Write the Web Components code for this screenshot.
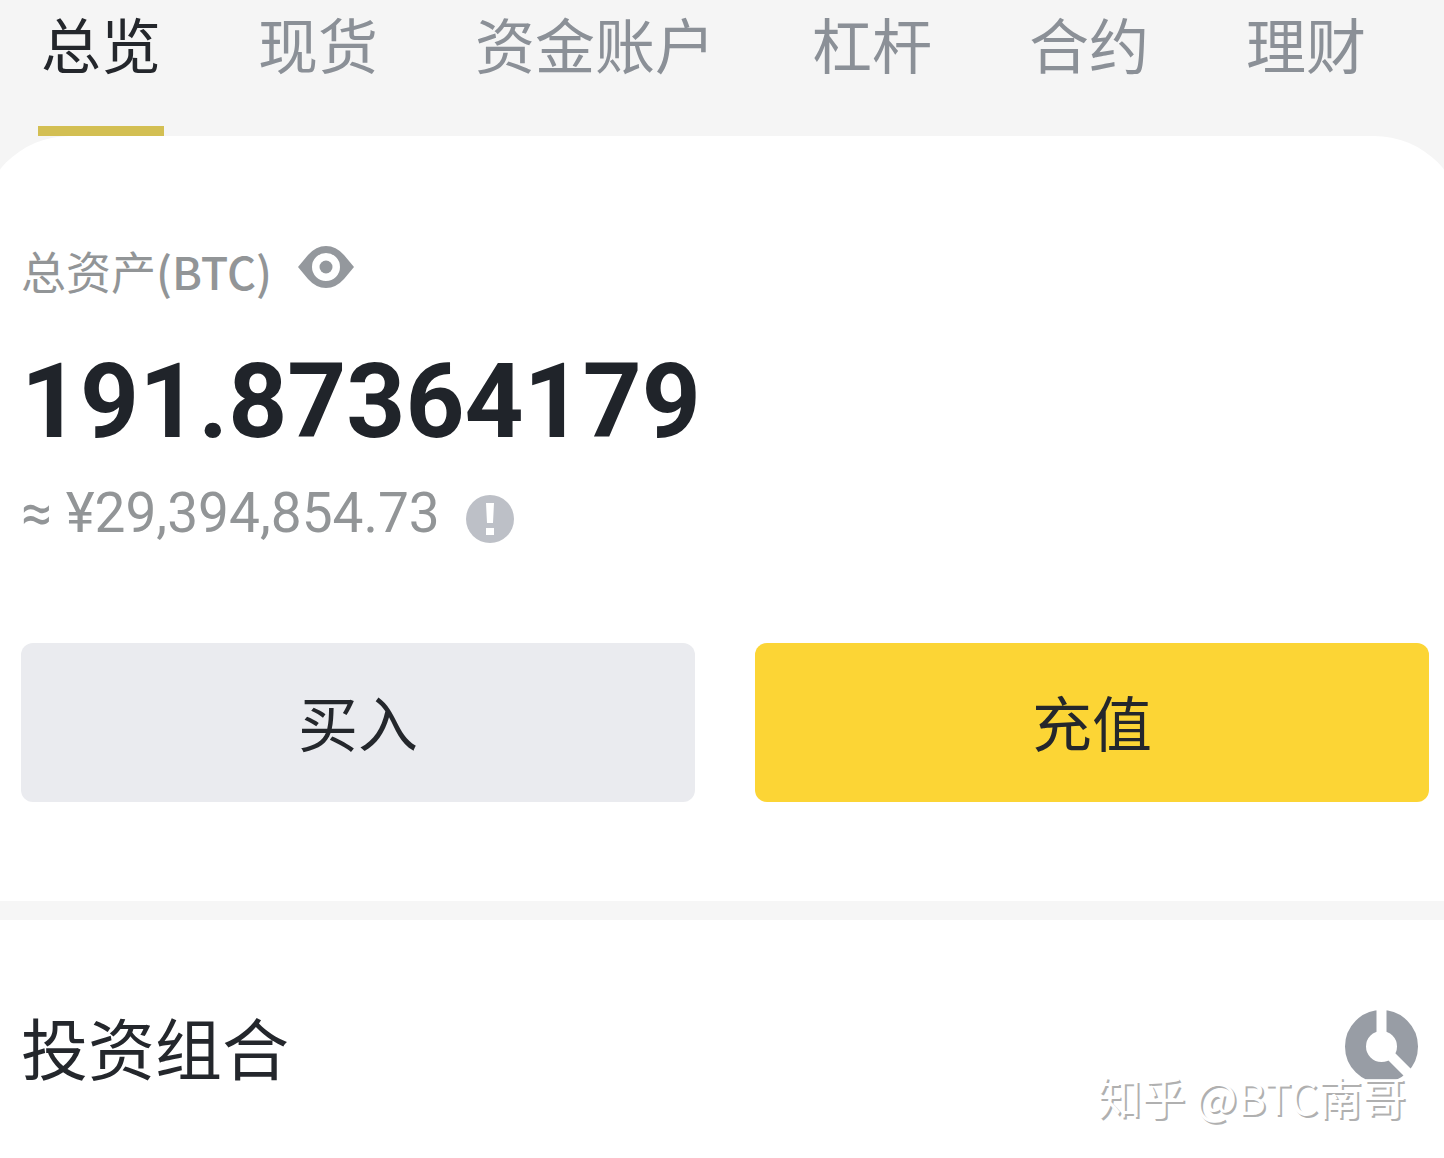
<!DOCTYPE html>
<html lang="zh-CN">
<head>
<meta charset="utf-8">
<meta name="viewport" content="width=device-width, initial-scale=1">
<title>总览</title>
<style>
  html { background: #fff; }
  body { margin: 0; font-family: 'Noto Sans CJK SC', sans-serif; color: #24272c; }
</style>
</head>
<body>
<wallet-page>
  <wallet-tabs slot="tabs">
    <wallet-tab selected>总览</wallet-tab>
    <wallet-tab>现货</wallet-tab>
    <wallet-tab>资金账户</wallet-tab>
    <wallet-tab>杠杆</wallet-tab>
    <wallet-tab>合约</wallet-tab>
    <wallet-tab>理财</wallet-tab>
  </wallet-tabs>
  <asset-balance unit="BTC" amount="191.87364179" fiat="¥29,394,854.73">总资产</asset-balance>
  <action-row>
    <action-button>买入</action-button>
    <action-button kind="primary">充值</action-button>
  </action-row>
  <portfolio-head slot="portfolio">投资组合</portfolio-head>
  <author-mark slot="mark">知乎 @BTC南哥</author-mark>
</wallet-page>

<script>
(function () {
  // shared reset for the buttons in each shadow root
  const BTN = `
    button { margin:0; padding:0; border:0; background:none; font:inherit; color:inherit; cursor:pointer; }
    svg { display:block; }`;

  function define(name, html, setup) {
    if (customElements.get(name)) return;
    const tpl = document.createElement('template');
    tpl.innerHTML = html;
    customElements.define(name, class extends HTMLElement {
      connectedCallback() {
        if (this.shadowRoot) return;
        const root = this.attachShadow({ mode: 'open' });
        root.appendChild(tpl.content.cloneNode(true));
        if (setup) setup(this, root);
      }
    });
  }

  // page shell: grey header, white sheet whose round corners run past the edges
  define('wallet-page', `
    <style>
      :host { display:block; position:relative; overflow:hidden; min-height:100vh; background:#fff; }
      header { background:#f5f5f5; padding-bottom:36px; }
      main { position:relative; }
      .sheet { margin:-36px -20px 0; padding:107px 35px 99px 41px; background:#fff; border-radius:90px 90px 0 0; }
      .band { height:19px; background:#f6f6f6; }
    </style>
    <header><slot name="tabs"></slot></header>
    <main>
      <div class="sheet"><slot></slot></div>
      <div class="band"></div>
      <slot name="portfolio"></slot>
    </main>
    <slot name="mark"></slot>`);

  define('wallet-tabs', `
    <style>
      :host { display:block; position:relative; z-index:1; }
      nav { display:flex; gap:91px; padding:0 38px; }
    </style>
    <nav><slot></slot></nav>`);

  define('wallet-tab', `
    <style>${BTN}
      :host { display:block; flex:none; font-size:60px; line-height:86px; color:#8b9097; }
      :host([selected]) { color:#24272c; }
      button { display:block; padding:0 3px 40px; border-bottom:10px solid transparent; }
      :host([selected]) button { border-color:#d3bf53; }
    </style>
    <button type="button"><slot></slot></button>`,
    (host, root) => {
      const btn = root.querySelector('button');
      btn.setAttribute('aria-pressed', host.hasAttribute('selected'));
      btn.addEventListener('click', () => {
        for (const t of host.parentNode.children) {
          t.toggleAttribute('selected', t === host);
          t.shadowRoot.querySelector('button').setAttribute('aria-pressed', t === host);
        }
      });
    });

  define('asset-balance', `
    <style>${BTN}
      :host { display:block; color:#929597; }
      .row { display:flex; }
      .label { align-items:flex-start; gap:26px; font-size:45px; line-height:56px; }
      .unit { font-weight:500; }
      .amount { font:700 103px/128px Roboto,sans-serif; color:#20242a; padding-top:39px; }
      .fiat { align-items:center; gap:26px; font:400 55px/64px Roboto,sans-serif; padding-top:15px; }
      .fiat button { padding-top:12px; }
    </style>
    <div class="row label">
      <span><slot></slot><span class="unit"></span></span>
      <button type="button" aria-label="显示或隐藏">
        <svg width="56" height="48" viewBox="0 -3 56 48">
          <path fill="#94989d" fill-rule="evenodd" d="M0 21 L10 9 Q18 0 28 0 T46 9 L56 21 L46 33 Q38 42 28 42 T10 33Z M28 7 a14 14 0 1 0 0 28 a14 14 0 1 0 0 -28Z"/>
          <circle cx="28" cy="21" r="6.5" fill="#94989d"/>
        </svg>
      </button>
    </div>
    <div class="amount"></div>
    <div class="row fiat">
      <span class="value"></span>
      <button type="button" aria-label="说明">
        <svg width="48" height="48" viewBox="0 0 48 48">
          <circle cx="24" cy="24" r="24" fill="#bdc0c7"/>
          <path fill="#fff" d="M20 8h8l-1 20h-6z M20 33h8v7h-8z"/>
        </svg>
      </button>
    </div>`,
    (host, root) => {
      root.querySelector('.unit').textContent = '(' + host.getAttribute('unit') + ')';
      root.querySelector('.amount').textContent = host.getAttribute('amount');
      root.querySelector('.value').textContent = '≈ ' + host.getAttribute('fiat');
    });

  define('action-row', `
    <style>
      :host { display:grid; grid-template-columns:1fr 1fr; gap:60px; padding-top:98px; }
    </style>
    <slot></slot>`);

  define('action-button', `
    <style>${BTN}
      :host { display:block; }
      button { width:100%; padding:34px 0 37px; border-radius:12px; background:#eaebef; font-size:60px; line-height:88px; }
      :host([kind=primary]) button { background:#fcd535; }
    </style>
    <button type="button"><slot></slot></button>`);

  define('portfolio-head', `
    <style>${BTN}
      :host { display:flex; align-items:center; justify-content:space-between; padding:76px 26px 60px 21px; }
      h2 { margin:0; font-size:67px; line-height:100px; font-weight:400; }
    </style>
    <h2><slot></slot></h2>
    <button type="button" aria-label="资产分布">
      <svg width="73" height="73" viewBox="0 0 73 73">
        <circle cx="36.5" cy="36.5" r="26" fill="none" stroke="#989da5" stroke-width="21"/>
        <path d="M36.5 36.5V-2 M36.5 36.5L68 68" stroke="#fff" stroke-width="10" fill="none"/>
      </svg>
    </button>`);

  // signature lying over the lower right corner: white strokes, grey shadow
  define('author-mark', `
    <style>
      :host { position:absolute; right:38px; bottom:30px; font-size:44px; line-height:64px; color:#fff;
              text-shadow:2px 2px 0 #b0b0b0; pointer-events:none; white-space:nowrap; }
    </style>
    <slot></slot>`);
})();
</script>
</body>
</html>
